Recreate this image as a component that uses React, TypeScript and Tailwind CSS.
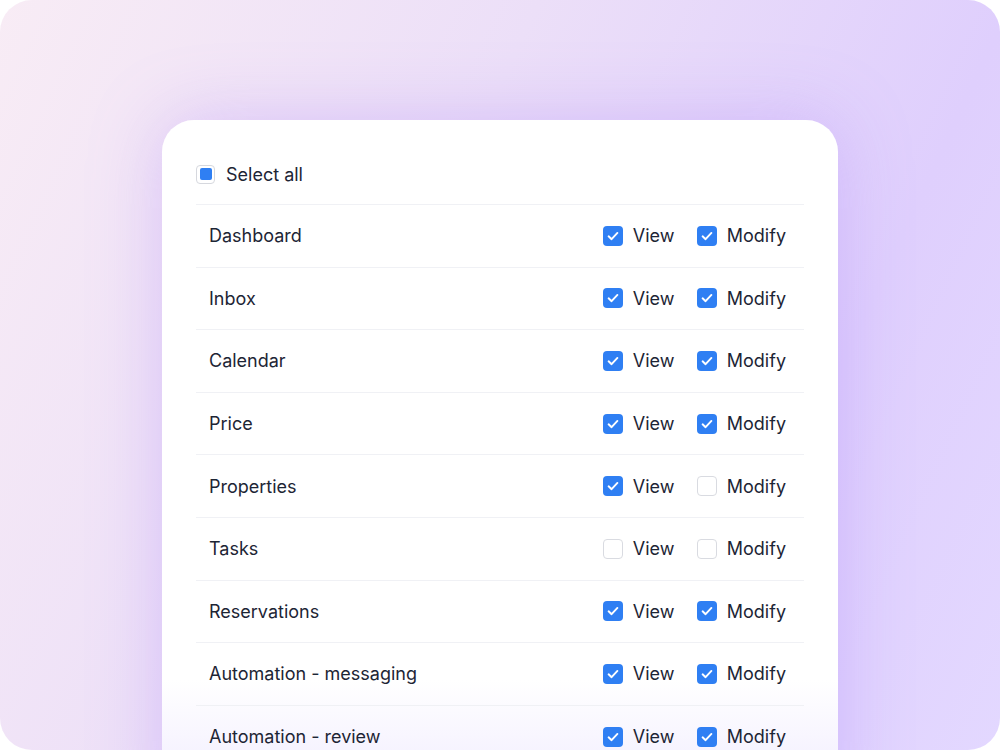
const rows: { name: string; view: boolean; modify: boolean }[] = [
  { name: 'Dashboard', view: true, modify: true },
  { name: 'Inbox', view: true, modify: true },
  { name: 'Calendar', view: true, modify: true },
  { name: 'Price', view: true, modify: true },
  { name: 'Properties', view: true, modify: false },
  { name: 'Tasks', view: false, modify: false },
  { name: 'Reservations', view: true, modify: true },
  { name: 'Automation - messaging', view: true, modify: true },
  { name: 'Automation - review', view: true, modify: true },
]

function Box({ checked }: { checked: boolean }) {
  if (!checked) {
    return <span className="w-5 h-5 rounded-[4px] border-[1.5px] border-[#d9dbe1] bg-white shrink-0" />
  }
  return (
    <span className="w-5 h-5 rounded-[4px] bg-[#2f7ff3] flex items-center justify-center shrink-0">
      <svg width="14" height="14" viewBox="0 0 14 14" fill="none">
        <path d="M2.6 7.3 5.6 10.2 11.4 3.9" stroke="white" strokeWidth="1.9" strokeLinecap="round" strokeLinejoin="round" />
      </svg>
    </span>
  )
}

export default function App() {
  return (
    <div
      className="w-[1000px] h-[750px] rounded-[32px] overflow-hidden bg-[linear-gradient(115deg,#f8ecf5_0%,#ecdff8_40%,#dfcffd_75%,#e3d8ff_100%)]"
      style={{ fontFamily: 'Inter, "Noto Sans", sans-serif' }}
    >
      <div className="ml-[162px] mt-[120px] w-[676px] h-[700px] rounded-t-[32px] bg-[linear-gradient(180deg,#ffffff_0px,#ffffff_560px,#f5f2ff_640px)] shadow-[0_0_70px_rgba(170,130,250,0.35)] px-[34px] pt-[39px] text-[18px] text-[#1d2535]">
        <div className="flex items-center gap-[11px] h-[30px]">
          <span className="w-[19px] h-[19px] rounded-[4px] border-[1.5px] border-[#d6d8de] bg-white flex items-center justify-center">
            <span className="w-[12px] h-[12px] rounded-[2px] bg-[#2f7ff3]" />
          </span>
          <span>Select all</span>
        </div>
        <div className="mt-[15px]">
          {rows.map((r) => (
            <div key={r.name} className="h-[62.6px] border-t border-[#f0f1f5] flex items-center pl-[13px] pr-[18px]">
              <span className="flex-1">{r.name}</span>
              <div className="flex items-center gap-[10px] w-[94px]">
                <Box checked={r.view} />
                <span>View</span>
              </div>
              <div className="flex items-center gap-[10px]">
                <Box checked={r.modify} />
                <span>Modify</span>
              </div>
            </div>
          ))}
        </div>
      </div>
    </div>
  )
}
